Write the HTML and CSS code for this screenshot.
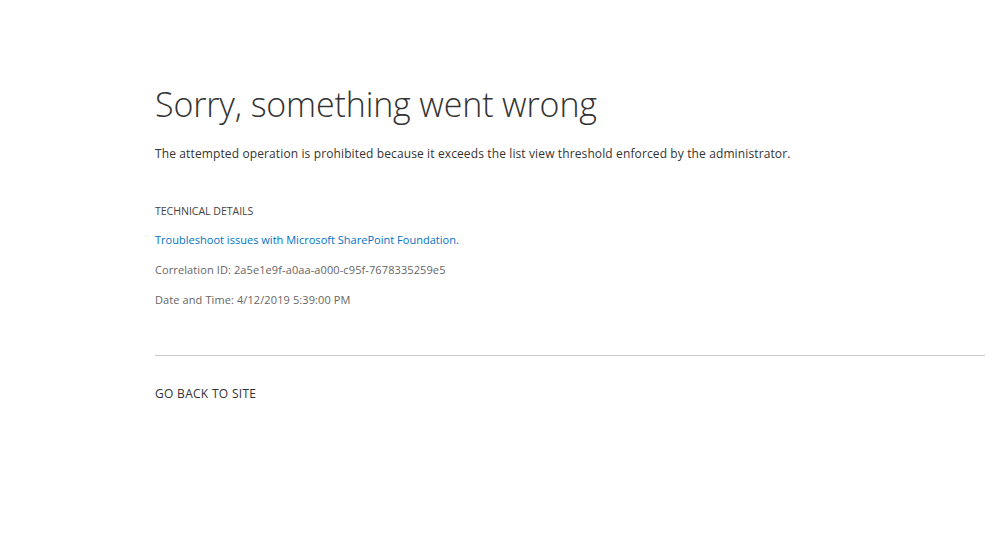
FILE: index.html
```html
<!DOCTYPE html>
<html lang="en">
<head>
<meta charset="utf-8">
<title>Error</title>
<link rel="stylesheet" href="styles.css">
</head>
<body>
<div class="page">
  <h1 class="title">Sorry, something went wrong</h1>
  <p class="message">The attempted operation is prohibited because it exceeds the list view threshold enforced by the administrator.</p>
  <div class="details">
    <div class="details-head">TECHNICAL DETAILS</div>
    <a class="details-link" href="#">Troubleshoot issues with Microsoft SharePoint Foundation.</a>
    <div class="details-row">Correlation ID: 2a5e1e9f-a0aa-a000-c95f-7678335259e5</div>
    <div class="details-row">Date and Time: 4/12/2019 5:39:00 PM</div>
  </div>
  <hr class="divider">
  <a class="back" href="#">GO BACK TO SITE</a>
</div>
</body>
</html>
```
FILE: styles.css
```css
html, body {
  margin: 0;
  padding: 0;
  background: #ffffff;
}
body {
  font-family: "Open Sans", "Noto Sans", "Liberation Sans", sans-serif;
  color: #333333;
}
.page {
  padding: 80px 22px 0 155px;
  display: flex;
  flex-direction: column;
  align-items: flex-start;
}
.title {
  margin: 0;
  font-size: 34px;
  font-weight: 300;
  line-height: 48px;
  color: #333333;
  letter-spacing: -0.15px;
}
.message {
  margin: 17px 0 0 0;
  font-size: 12px;
  line-height: 18px;
  color: #333333;
  letter-spacing: 0.12px;
}
.details {
  margin-top: 39px;
  display: flex;
  flex-direction: column;
  align-items: flex-start;
  gap: 12px;
  font-size: 11px;
  line-height: 18px;
}
.details-head {
  color: #444444;
  margin-bottom: -1px;
  font-size: 10.6px;
  letter-spacing: -0.05px;
}
.details-link {
  color: #0072c6;
  text-decoration: none;
  letter-spacing: 0.02px;
}
.details-row {
  color: #666666;
  letter-spacing: 0.1px;
}
.divider {
  align-self: stretch;
  margin: 46px 0 0 0;
  border: 0;
  border-top: 1px solid #c8c8c8;
  height: 0;
}
.back {
  margin-top: 29px;
  font-size: 12px;
  line-height: 18px;
  color: #333333;
  text-decoration: none;
  letter-spacing: 0.3px;
}
```
